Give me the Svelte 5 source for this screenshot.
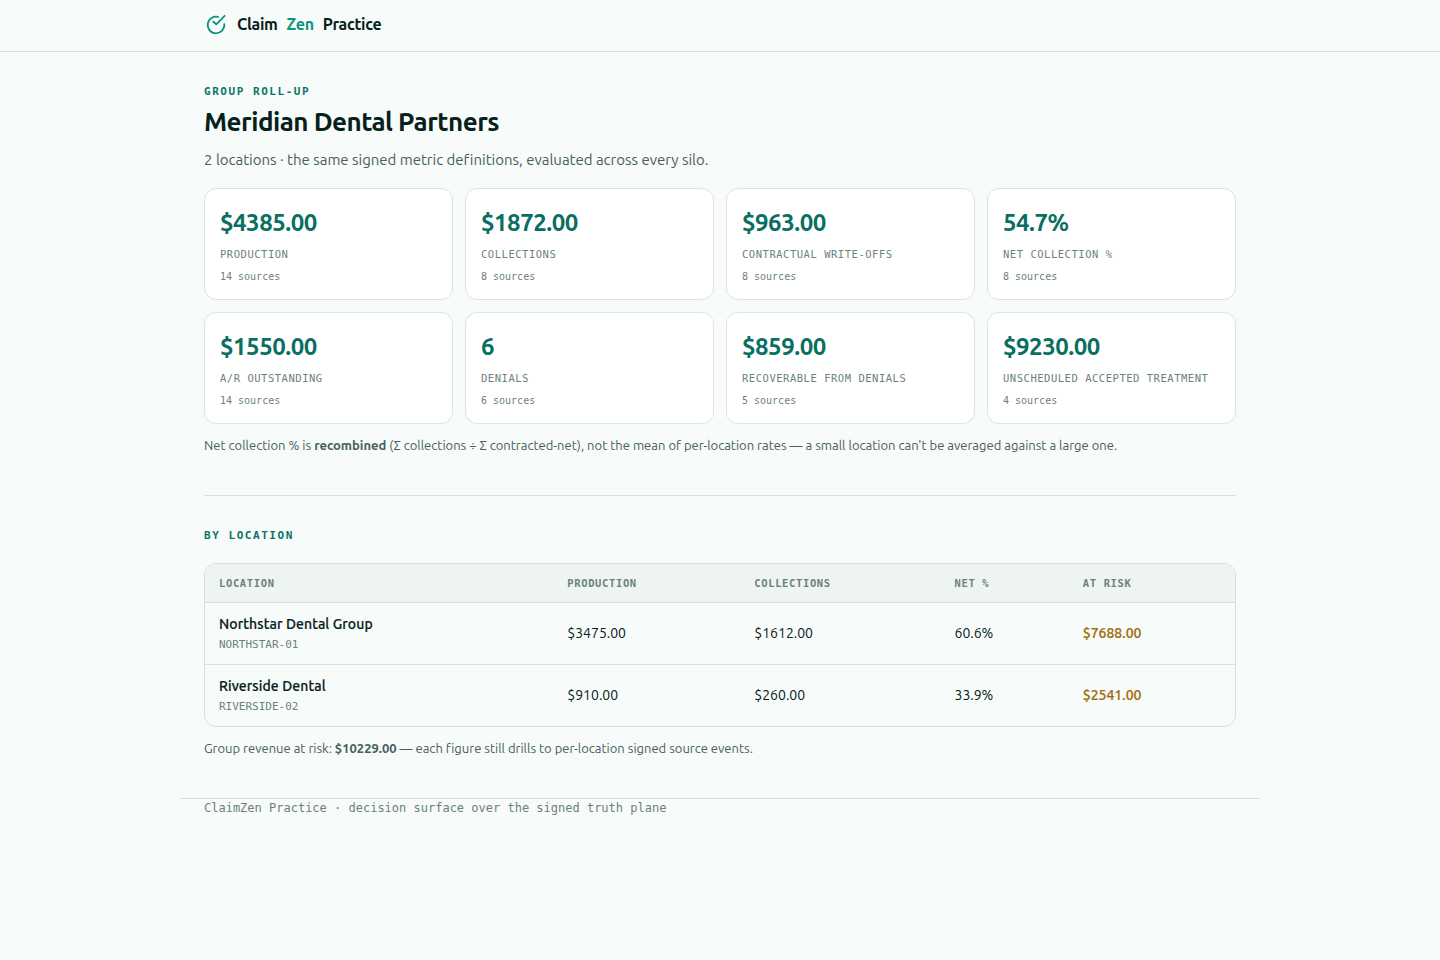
<script>
  const metrics = [
    ['$4385.00', 'Production', 14],
    ['$1872.00', 'Collections', 8],
    ['$963.00', 'Contractual write-offs', 8],
    ['54.7%', 'Net collection %', 8],
    ['$1550.00', 'A/R outstanding', 14],
    ['6', 'Denials', 6],
    ['$859.00', 'Recoverable from denials', 5],
    ['$9230.00', 'Unscheduled accepted treatment', 4],
  ];
  const locations = [
    ['Northstar Dental Group', 'NORTHSTAR-01', '$3475.00', '$1612.00', '60.6%', '$7688.00'],
    ['Riverside Dental', 'RIVERSIDE-02', '$910.00', '$260.00', '33.9%', '$2541.00'],
  ];
</script>

<header>
  <div class="bar">
    <svg width="24" height="24" viewBox="0 0 24 24" fill="none" stroke="currentColor" stroke-width="1.8" stroke-linecap="round" stroke-linejoin="round">
      <path d="M20.3 12.2a8.3 8.3 0 1 1-6-7.2" />
      <path d="m9.3 9.7 3 2.6L20.6 3.8" />
    </svg>
    <span>Claim</span><span class="zen">Zen</span><span>Practice</span>
  </div>
</header>
<main>
  <section>
    <p class="eyebrow">Group roll-up</p>
    <h1>Meridian Dental Partners</h1>
    <p class="lede">2 locations · the same signed metric definitions, evaluated across every silo.</p>
    <div class="grid">
      {#each metrics as [value, label, sources]}
        <div class="card">
          <div class="value">{value}</div>
          <div class="label">{label}</div>
          <div class="sources">{sources} sources</div>
        </div>
      {/each}
    </div>
    <p class="note">Net collection % is <b>recombined</b> (Σ collections ÷ Σ contracted-net), not the mean of per-location rates — a small location can't be averaged against a large one.</p>
  </section>
  <section class="by">
    <p class="eyebrow">By location</p>
    <div class="table">
      <div class="row head"><span>Location</span><span>Production</span><span>Collections</span><span>Net %</span><span>At risk</span></div>
      {#each locations as [name, id, production, collections, net, risk]}
        <div class="row">
          <div><div class="name">{name}</div><div class="id">{id}</div></div>
          <span>{production}</span><span>{collections}</span><span>{net}</span><span class="risk">{risk}</span>
        </div>
      {/each}
    </div>
    <p class="note tight">Group revenue at risk: <b>$10229.00</b> — each figure still drills to per-location signed source events.</p>
  </section>
</main>
<footer>ClaimZen Practice · decision surface over the signed truth plane</footer>

<style>
  :global(body) {
    background: #f7fbfa;
    color: #06201b;
    font-family: Ubuntu, "Noto Sans", sans-serif;
    font-size: 16px;
    line-height: 1.5;
  }
  p, h1 { margin: 0; }
  header { height: 51px; border-bottom: 1px solid #d8dfdd; }
  .bar {
    box-sizing: border-box; max-width: 1080px; height: 48px; margin: 0 auto; padding: 0 24px;
    display: flex; align-items: center; gap: 9px; font-weight: 600; letter-spacing: -.02em;
  }
  .bar svg { color: #0d9482; }
  .zen { color: #0d9482; }
  main { max-width: 1032px; margin: 0 auto; padding-top: 32px; }
  .eyebrow {
    font: 700 11px/16px "DejaVu Sans Mono", monospace; letter-spacing: .14em;
    text-transform: uppercase; color: #0a7567;
  }
  h1 { font-size: 26px; line-height: 30px; font-weight: 600; letter-spacing: -.02em; margin-top: 7px; }
  .lede { font-size: 15px; line-height: 24px; color: #48605a; margin-top: 11px; letter-spacing: -.01px; font-variant-ligatures: none; }
  .grid { display: grid; grid-template-columns: repeat(4, 1fr); gap: 12px; margin-top: 16px; }
  .card {
    box-sizing: border-box; height: 112px; padding: 17px 15px; background: #fff;
    border: 1px solid #dfe4e3; border-radius: 12px;
  }
  .value { font-size: 24px; line-height: 34px; font-weight: 600; letter-spacing: -.02em; color: #0a6f61; }
  .label {
    font: 10.5px/16px "DejaVu Sans Mono", monospace; letter-spacing: .05em; text-transform: uppercase;
    color: #6b827c; margin-top: 6px; white-space: nowrap;
  }
  .sources { font: 10px/16px "DejaVu Sans Mono", monospace; color: #6b827c; margin-top: 7px; }
  .note { font-size: 13px; line-height: 20px; color: #48605a; margin-top: 11px; white-space: nowrap; }
  .tight { letter-spacing: -.007px; font-variant-ligatures: none; }
  .by { border-top: 1px solid #d8dfdd; margin-top: 40px; padding-top: 32px; }
  .table { margin-top: 19px; border: 1px solid #d8dfdd; border-radius: 12px; overflow: hidden; }
  .row {
    display: grid; grid-template-columns: 348.3px 187px 200.2px 128.3px 1fr; align-items: center;
    height: 61px; padding-left: 14px; font-size: 14px; border-top: 1px solid #d8dfdd;
  }
  .head {
    height: 38px; border-top: 0; background: #eef4f2; color: #6b827c;
    font: 700 10.5px "DejaVu Sans Mono", monospace; letter-spacing: .06em; text-transform: uppercase;
  }
  .name { line-height: 21px; font-weight: 500; letter-spacing: .1px; -webkit-text-stroke: .2px currentColor; padding-top: 2px; }
  .id { font: 11px/20px "DejaVu Sans Mono", monospace; color: #6b827c; }
  .risk { color: #a16c0b; font-weight: 500; -webkit-text-stroke: .2px currentColor; }
  footer {
    box-sizing: border-box; max-width: 1080px; margin: 40px auto 0; padding: 0 24px;
    border-top: 1px solid #d8dfdd; font: 12px/18px "DejaVu Sans Mono", monospace; color: #6b827c;
  }
</style>
